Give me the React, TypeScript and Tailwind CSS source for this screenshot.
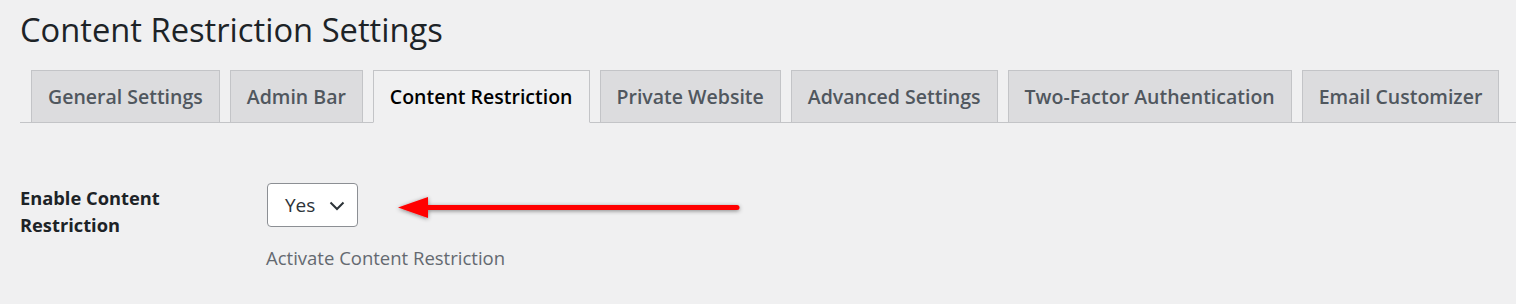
import React from 'react';

const tabs = [
  'General Settings',
  'Admin Bar',
  'Content Restriction',
  'Private Website',
  'Advanced Settings',
  'Two-Factor Authentication',
  'Email Customizer',
];

const ACTIVE = 'Content Restriction';

function Arrow() {
  return (
    <svg
      className="absolute left-[380px] top-[185px] pointer-events-none"
      width="380"
      height="45"
      viewBox="380 185 380 45"
    >
      <defs>
        <filter id="arrow-shadow" x="-10%" y="-60%" width="120%" height="220%">
          <feDropShadow dx="0" dy="1" stdDeviation="2.2" floodColor="#000" floodOpacity="0.45" />
        </filter>
      </defs>
      <g filter="url(#arrow-shadow)">
        <line x1="424" y1="207.5" x2="737" y2="207.5" stroke="#ff0000" strokeWidth="5" strokeLinecap="round" />
        <polygon points="398,207.5 428,197 428,218" fill="#ff0000" />
      </g>
    </svg>
  );
}

export default function App() {
  return (
    <div
      className="relative w-[1516px] h-[304px] overflow-hidden bg-[#f0f0f1] pl-5 text-[#1d2327]"
      style={{ fontFamily: '"Open Sans", "Noto Sans", Arial, sans-serif' }}
    >
      <h1 className="h-[70px] pt-[8px] text-[32.7px] leading-[44px] font-normal text-[#1d2327]">
        Content Restriction Settings
      </h1>

      {/* tab strip */}
      <div className="flex gap-[10px] border-b border-[#c3c4c7] pl-[11px]">
        {tabs.map((t) => {
          const active = t === ACTIVE;
          return (
            <div
              key={t}
              className={
                active
                  ? '-mb-px flex h-[53px] items-center border border-[#c3c4c7] border-b-[#f0f0f1] bg-[#f0f0f1] px-4 text-[19.5px] font-semibold text-black'
                  : 'flex h-[52px] items-center border border-b-0 border-[#c3c4c7] bg-[#dcdcde] px-4 text-[19.5px] font-semibold text-[#50575e]'
              }
            >
              {t}
            </div>
          );
        })}
      </div>

      {/* form row */}
      <div className="mt-[60px] flex">
        <div className="w-[247px] pt-[1px] text-[18.3px] font-bold leading-[27px] text-[#1d2327]">
          Enable Content
          <br />
          Restriction
        </div>
        <div className="flex flex-col items-start">
          <div className="flex h-[44px] w-[91px] items-center justify-between rounded-[4px] border border-[#8c8f94] bg-white pl-[17px] pr-[12px] pt-[1px] text-[19px] text-[#2c3338]">
            <span>Yes</span>
            <svg width="16" height="10" viewBox="0 0 16 10">
              <polyline points="1.5,1.5 8,8 14.5,1.5" fill="none" stroke="#2c3338" strokeWidth="2" />
            </svg>
          </div>
          <p className="mt-[17px] -ml-px text-[18.5px] leading-[27px] text-[#646970]">
            Activate Content Restriction
          </p>
        </div>
      </div>

      <Arrow />
    </div>
  );
}
